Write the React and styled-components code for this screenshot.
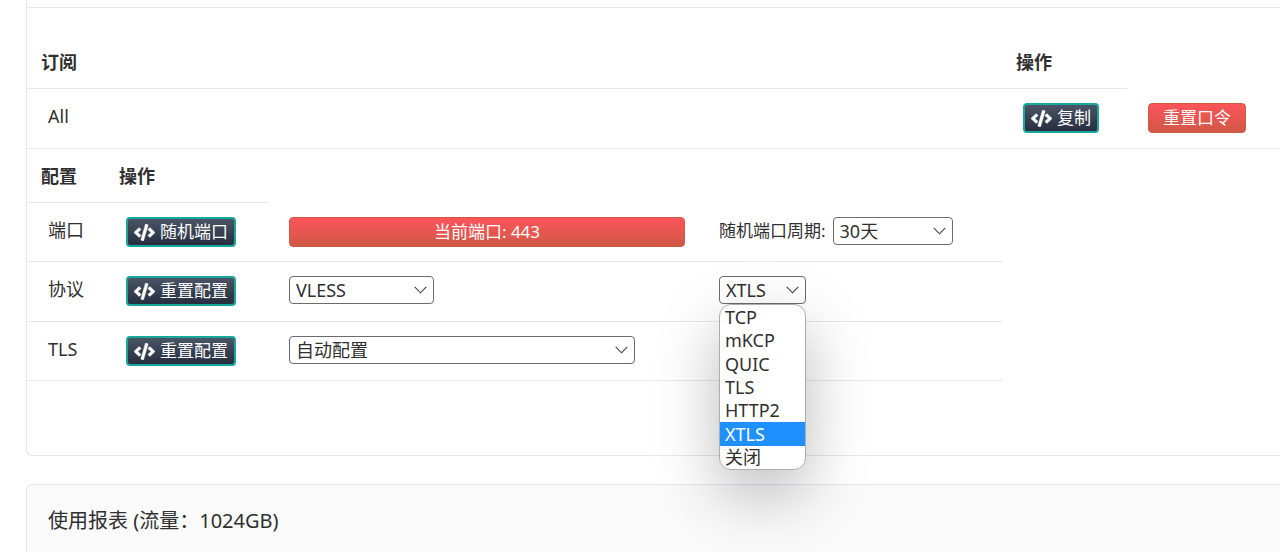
import React, { useState } from "react";
import styled, { createGlobalStyle } from "styled-components";
import { FaCode } from "react-icons/fa";

const line = "#e4e7ed";

const GlobalStyle = createGlobalStyle`
  *, *::before, *::after { box-sizing: border-box; }
  body {
    margin: 0;
    background: #fff;
    color: #303030;
    font-family: "Noto Sans", "Noto Sans CJK SC", sans-serif;
    font-size: 18px;
    line-height: 26px;
  }
  button, select { font-family: inherit; color: inherit; margin: 0; }
`;

const Page = styled.main`
  height: 100vh;
  overflow-y: auto;
  scrollbar-width: none;
  padding-left: 26px;
`;

const Card = styled.section`
  border: 1px solid ${line};
  border-right: 0;
  border-radius: ${(p) => (p.$continued ? "0 0 0 6px" : "6px 0 0 6px")};
  border-top-width: ${(p) => (p.$continued ? 0 : "1px")};
  margin-bottom: 28px;
`;

const CardTop = styled.div`
  height: 8px;
  border-bottom: 1px solid ${line};
`;

const CardBody = styled.div`
  padding: 27px 0 74px;
`;

const CardTitle = styled.h2`
  margin: 0;
  padding: 21px;
  background: #fafafa;
  border-radius: 6px 0 0 0;
  font-size: 20px;
  font-weight: 400;
  line-height: 30px;
`;

const Table = styled.table`
  width: ${(p) => (p.$inset ? "calc(100% - 278px)" : "100%")};
  table-layout: fixed;
  border-collapse: separate;
  border-spacing: 0;
`;

const Col = styled.col`
  width: ${(p) => p.$width || "auto"};
`;

const HeadCell = styled.th`
  padding: 14px 14px 13px;
  border-bottom: 1px solid ${line};
  text-align: left;
  font-weight: 700;
`;

const Cell = styled.td`
  height: ${(p) => (p.$tall ? "60px" : "59px")};
  padding: 14px 0 14px 21px;
  border-bottom: 1px solid ${line};
  vertical-align: top;
`;

const Button = styled.button`
  display: ${(p) => (p.$block ? "flex" : "inline-flex")};
  width: ${(p) => (p.$block ? "calc(100% - 13px)" : "auto")};
  vertical-align: top;
  align-items: center;
  justify-content: center;
  gap: 5px;
  height: 30px;
  border-radius: 4px;
  font-size: 17px;
  line-height: 26px;
  white-space: nowrap;
  color: #fff;
  cursor: pointer;
`;

const DarkButton = styled(Button)`
  padding: 0 6px;
  border: 2px solid #18a79d;
  background: linear-gradient(#4a5465, #262e40);
`;

const RedButton = styled(Button)`
  padding: 0 14px;
  border: 1px solid #cf5847;
  background: linear-gradient(#fd545a, #cf5846);
`;

const CodeIcon = styled(FaCode)`
  width: 21px;
  height: 17px;
  flex: none;
  stroke: currentColor;
  stroke-width: 14px;
`;

const SelectBox = styled.span`
  position: relative;
  display: inline-grid;
  vertical-align: top;
  align-items: center;
  width: ${(p) => p.$width};
  height: 28px;
`;

const NativeSelect = styled.select`
  grid-area: 1 / 1;
  appearance: none;
  width: 100%;
  height: 28px;
  padding: 0 26px 0 6px;
  border: 1px solid #6b6b6b;
  border-radius: 4px;
  background: transparent;
  font-size: 18px;
  line-height: 26px;
`;

const Chevron = styled.svg`
  grid-area: 1 / 1;
  justify-self: end;
  width: 13px;
  height: 8px;
  margin-right: 7px;
  pointer-events: none;
`;

const Field = styled.div`
  display: flex;
  align-items: center;
  gap: 7px;
  white-space: nowrap;
`;

const FieldLabel = styled.label`
  font-size: 17px;
`;

const Menu = styled.ul`
  position: absolute;
  z-index: 2;
  top: 100%;
  left: 0;
  display: flex;
  flex-direction: column;
  width: 100%;
  height: 166px;
  margin: 0;
  padding: 0;
  list-style: none;
  overflow: hidden;
  border: 1px solid #adadad;
  border-radius: 12px;
  background: #fff;
  box-shadow: 0 24px 64px rgba(0, 0, 0, 0.27);
`;

const MenuItem = styled.li`
  flex: 1;
  display: flex;
  align-items: center;
  min-height: 0;
  padding-left: 5px;
  line-height: 22px;
  cursor: default;
  color: ${(p) => (p.$active ? "#fff" : "inherit")};
  background: ${(p) => (p.$active ? "#1e90ff" : "transparent")};
`;

function Select({ id, label, width, options, value, onChange, open }) {
  const control = onChange ? { value, onChange: (e) => onChange(e.target.value) } : {};
  return (
    <SelectBox $width={width}>
      <NativeSelect id={id} aria-label={label} {...control}>
        {options.map((o) => (
          <option key={o}>{o}</option>
        ))}
      </NativeSelect>
      <Chevron viewBox="0 0 13 8" fill="none" stroke="#404040" strokeWidth="1.1" aria-hidden="true">
        <path d="M0.7 0.9 6.5 6.8 12.3 0.9" />
      </Chevron>
      {open && (
        <Menu role="listbox" aria-label={label}>
          {options.map((o) => (
            <MenuItem
              key={o}
              role="option"
              aria-selected={o === value}
              $active={o === value}
              onClick={() => onChange(o)}
            >
              {o}
            </MenuItem>
          ))}
        </Menu>
      )}
    </SelectBox>
  );
}

function CodeButton({ children }) {
  return (
    <DarkButton type="button">
      <CodeIcon aria-hidden="true" />
      {children}
    </DarkButton>
  );
}

const transports = ["TCP", "mKCP", "QUIC", "TLS", "HTTP2", "XTLS", "关闭"];

export default function App() {
  const [transport, setTransport] = useState("XTLS");
  return (
    <>
      <GlobalStyle />
      <Page>
        <Card $continued>
          <CardTop />
          <CardBody>
            <Table>
              <colgroup>
                <Col />
                <Col $width="125px" />
                <Col $width="153px" />
              </colgroup>
              <thead>
                <tr>
                  <HeadCell scope="col">订阅</HeadCell>
                  <HeadCell scope="col">操作</HeadCell>
                </tr>
              </thead>
              <tbody>
                <tr>
                  <Cell $tall>All</Cell>
                  <Cell $tall>
                    <CodeButton>复制</CodeButton>
                  </Cell>
                  <Cell $tall>
                    <RedButton type="button">重置口令</RedButton>
                  </Cell>
                </tr>
              </tbody>
            </Table>
            <Table $inset>
              <colgroup>
                <Col $width="78px" />
                <Col $width="163px" />
                <Col />
                <Col $width="304px" />
              </colgroup>
              <thead>
                <tr>
                  <HeadCell scope="col">配置</HeadCell>
                  <HeadCell scope="col">操作</HeadCell>
                </tr>
              </thead>
              <tbody>
                <tr>
                  <Cell>端口</Cell>
                  <Cell>
                    <CodeButton>随机端口</CodeButton>
                  </Cell>
                  <Cell>
                    <RedButton type="button" $block>
                      当前端口: 443
                    </RedButton>
                  </Cell>
                  <Cell>
                    <Field>
                      <FieldLabel htmlFor="cycle">随机端口周期:</FieldLabel>
                      <Select id="cycle" width="120px" options={["30天"]} />
                    </Field>
                  </Cell>
                </tr>
                <tr>
                  <Cell $tall>协议</Cell>
                  <Cell $tall>
                    <CodeButton>重置配置</CodeButton>
                  </Cell>
                  <Cell $tall>
                    <Select id="protocol" label="协议" width="145px" options={["VLESS"]} />
                  </Cell>
                  <Cell $tall>
                    <Select
                      id="transport"
                      label="传输"
                      width="87px"
                      options={transports}
                      value={transport}
                      onChange={setTransport}
                      open
                    />
                  </Cell>
                </tr>
                <tr>
                  <Cell>TLS</Cell>
                  <Cell>
                    <CodeButton>重置配置</CodeButton>
                  </Cell>
                  <Cell>
                    <Select id="tls" label="TLS" width="346px" options={["自动配置"]} />
                  </Cell>
                  <Cell />
                </tr>
              </tbody>
            </Table>
          </CardBody>
        </Card>
        <Card>
          <CardTitle>使用报表 (流量：1024GB)</CardTitle>
        </Card>
      </Page>
    </>
  );
}
